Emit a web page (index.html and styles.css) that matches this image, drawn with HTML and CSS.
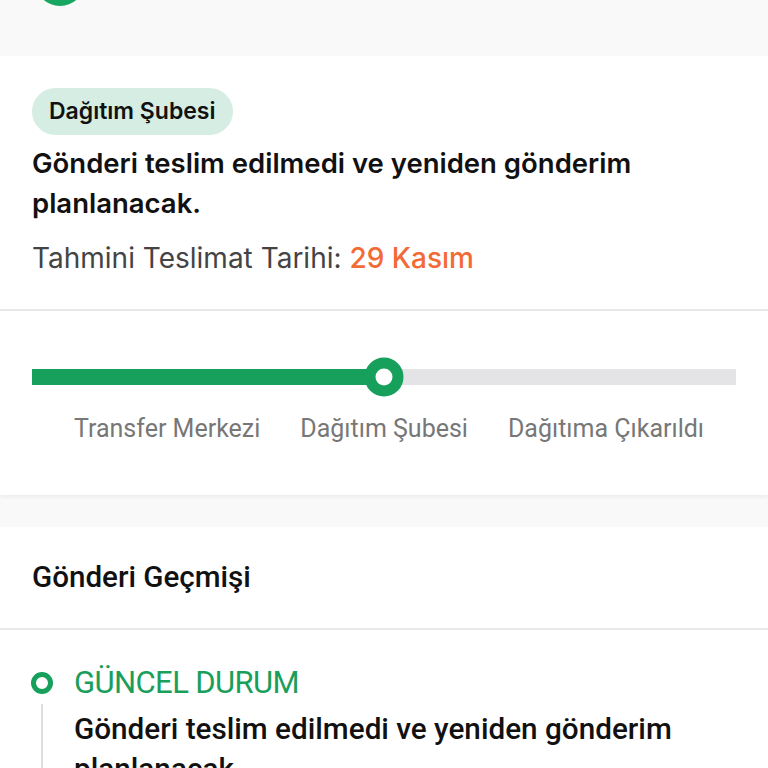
FILE: index.html
```html
<!DOCTYPE html>
<html lang="tr">
<head>
<meta charset="utf-8">
<link rel="stylesheet" href="styles.css">
</head>
<body>
<div class="top-strip">
  <div class="top-blob"></div>
</div>

<section class="status-card">
  <span class="badge">Dağıtım Şubesi</span>
  <h1 class="status-title">Gönderi teslim edilmedi ve yeniden gönderim planlanacak.</h1>
  <p class="eta">Tahmini Teslimat Tarihi: <span class="eta-date">29 Kasım</span></p>
</section>

<section class="progress-card">
  <div class="track">
    <div class="track-fill" style="width:50%"></div>
    <div class="knob" style="left:50%"></div>
  </div>
  <div class="steps">
    <span class="step">Transfer Merkezi</span>
    <span class="step">Dağıtım Şubesi</span>
    <span class="step">Dağıtıma Çıkarıldı</span>
  </div>
</section>

<div class="gap"></div>

<section class="history-card">
  <h2 class="history-title">Gönderi Geçmişi</h2>
  <div class="timeline">
    <div class="tl-item">
      <div class="tl-rail">
        <span class="tl-ring"></span>
        <span class="tl-line"></span>
      </div>
      <div class="tl-body">
        <div class="tl-label">GÜNCEL DURUM</div>
        <div class="tl-text">Gönderi teslim edilmedi ve yeniden gönderim planlanacak.</div>
      </div>
    </div>
  </div>
</section>
</body>
</html>
```

FILE: styles.css
```css
html, body {
  margin: 0;
  padding: 0;
}
body {
  background: #f9f9f9;
  width: 768px;
  height: 768px;
  overflow: hidden;
  font-family: "Roboto", "Liberation Sans", sans-serif;
}

.top-strip {
  height: 56px;
  background: #f9f9f9;
  overflow: hidden;
}
.top-blob {
  width: 50px;
  height: 50px;
  margin-left: 35px;
  margin-top: -44px;
  border-radius: 50%;
  background: #17a760;
}

.status-card {
  background: #ffffff;
  padding: 32px 32px 34px;
  font-family: "Inter", "Liberation Sans", sans-serif;
  border-bottom: 2px solid #e8e8e8;
}
.badge {
  display: inline-block;
  background: #d5ede2;
  color: #111;
  font-size: 23px;
  font-weight: 600;
  line-height: 27px;
  padding: 10px 17px;
  border-radius: 24px;
}
.status-title {
  margin: 8px 0 0;
  font-size: 27.5px;
  font-weight: 600;
  line-height: 40px;
  color: #111;
}
.eta {
  margin: 18px 0 0;
  font-size: 28px;
  font-weight: 400;
  line-height: 34px;
  color: #444;
}
.eta-date {
  color: #f26a35;
  font-weight: 500;
}

.progress-card {
  background: #ffffff;
  padding: 58px 32px 51px;
  box-shadow: 0 2px 4px rgba(0,0,0,0.06);
  position: relative;
}
.track {
  position: relative;
  height: 16px;
  background: #e4e4e6;
}
.track-fill {
  height: 100%;
  background: #17a05c;
}
.knob {
  position: absolute;
  top: 50%;
  width: 17px;
  height: 17px;
  border: 11px solid #17a05c;
  border-radius: 50%;
  background: #fff;
  transform: translate(-50%, -50%);
}
.steps {
  display: flex;
  justify-content: center;
  gap: 40px;
  margin-top: 29px;
  padding-left: 10px;
}
.step {
  font-size: 25px;
  line-height: 30px;
  color: #777;
}

.gap {
  height: 32px;
  background: #f9f9f9;
}

.history-card {
  background: #ffffff;
}
.history-title {
  margin: 0;
  padding: 34px 32px 35px;
  font-size: 29.6px;
  font-weight: 500;
  line-height: 32px;
  color: #111;
  border-bottom: 2px solid #e8e8e8;
}
.timeline {
  padding: 37px 32px 0;
}
.tl-item {
  display: grid;
  grid-template-columns: 20px 1fr;
  column-gap: 22px;
}
.tl-rail {
  display: flex;
  flex-direction: column;
  align-items: center;
  padding-top: 5px;
}
.tl-ring {
  width: 12px;
  height: 12px;
  border: 5px solid #17a05c;
  border-radius: 50%;
  flex: none;
}
.tl-line {
  width: 2px;
  flex: 1;
  background: #dedede;
  margin-top: 10px;
  min-height: 80px;
}
.tl-label {
  font-size: 31px;
  letter-spacing: -0.6px;
  line-height: 32px;
  color: #1a9e5c;
  font-weight: 400;
}
.tl-text {
  margin-top: 10px;
  font-size: 29.7px;
  line-height: 40px;
  font-weight: 500;
  color: #111;
}
```
